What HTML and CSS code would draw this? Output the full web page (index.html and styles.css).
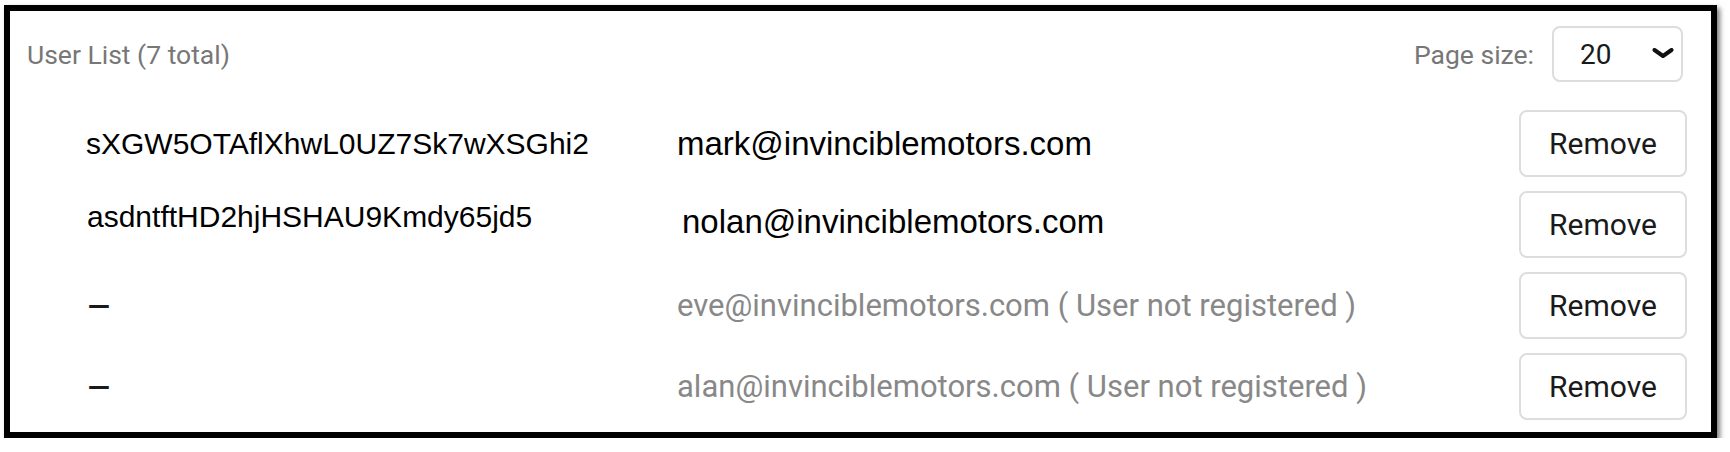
FILE: index.html
```html
<!DOCTYPE html>
<html lang="en">
<head>
    <meta charset="UTF-8">
    <title>User List</title>
    <link rel="stylesheet" href="styles.css">
</head>
<body>
    <div class="user-panel">
        <div class="panel-header">
            <span class="panel-title">User List (7 total)</span>
            <div class="page-size">
                <label for="page-size">Page size:</label>
                <div class="select-wrap">
                    <select id="page-size" name="page-size">
                        <option>10</option>
                        <option selected>20</option>
                        <option>50</option>
                    </select>
                    <svg class="select-chevron" width="22" height="10" viewBox="0 0 22 10">
                        <path d="M2.5 2 L11 8 L19.5 2" fill="none" stroke="#111" stroke-width="4" stroke-linecap="round" stroke-linejoin="round"/>
                    </svg>
                </div>
            </div>
        </div>

        <ul class="user-rows">
            <li class="user-row">
                <span class="user-id">sXGW5OTAflXhwL0UZ7Sk7wXSGhi2</span>
                <span class="user-email">mark@invinciblemotors.com</span>
                <button class="remove-btn">Remove</button>
            </li>
            <li class="user-row">
                <span class="user-id raised">asdntftHD2hjHSHAU9Kmdy65jd5</span>
                <span class="user-email raised-slight">nolan@invinciblemotors.com</span>
                <button class="remove-btn">Remove</button>
            </li>
            <li class="user-row">
                <span class="user-id dash">&ndash;</span>
                <span class="user-email pending">eve@invinciblemotors.com ( User not registered )</span>
                <button class="remove-btn">Remove</button>
            </li>
            <li class="user-row">
                <span class="user-id dash">&ndash;</span>
                <span class="user-email pending">alan@invinciblemotors.com ( User not registered )</span>
                <button class="remove-btn">Remove</button>
            </li>
        </ul>
    </div>
</body>
</html>
```

FILE: styles.css
```css
body {
    margin: 0;
    font-family: Roboto, 'Liberation Sans', sans-serif;
    background-color: #fff;
}

.user-panel {
    box-sizing: border-box;
    width: 1713px;
    height: 433px;
    margin: 5px 0 0 4px;
    border: 6px solid #000;
    background: #fff;
    box-shadow: 3px 3px 5px rgba(0, 0, 0, 0.5);
}

.panel-header {
    display: flex;
    align-items: center;
    justify-content: space-between;
    padding: 15px 28px 0 17px;
    height: 56px;
}

.panel-title {
    font-size: 26.5px;
    color: #777;
}

.page-size {
    display: flex;
    align-items: center;
    gap: 18px;
}

.page-size label {
    font-size: 26.5px;
    color: #777;
}

.select-wrap {
    position: relative;
}

.select-wrap select {
    appearance: none;
    -webkit-appearance: none;
    box-sizing: border-box;
    width: 131px;
    height: 56px;
    padding: 0 0 0 26px;
    border: 2px solid #ddd;
    border-radius: 8px;
    background: #fff;
    font-family: Roboto, sans-serif;
    font-size: 28px;
    color: #1a1a1a;
}

.select-chevron {
    position: absolute;
    right: 9px;
    top: 22px;
    pointer-events: none;
}

.user-rows {
    list-style: none;
    margin: 28px 0 0;
    padding: 0 24px 0 76px;
    display: flex;
    flex-direction: column;
    gap: 14px;
}

.user-row {
    display: grid;
    grid-template-columns: 591px 1fr 168px;
    align-items: center;
    height: 67px;
}

.user-id {
    font-family: 'Liberation Sans', Arial, sans-serif;
    font-size: 30px;
    color: #000;
}

.user-id.raised {
    margin: 0 0 15px 1px;
}

.user-id.dash {
    padding-top: 4px;
    font-family: Roboto, sans-serif;
    font-size: 40px;
    line-height: 1;
    color: #1a1a1a;
}

.user-email {
    font-family: 'Liberation Sans', Arial, sans-serif;
    font-size: 33px;
    color: #000;
}

.user-email.raised-slight {
    margin: 0 0 5px 5px;
}

.user-email.pending {
    font-family: Roboto, sans-serif;
    font-size: 31px;
    color: #888;
}

.remove-btn {
    box-sizing: border-box;
    width: 168px;
    height: 67px;
    border: 2px solid #ddd;
    border-radius: 8px;
    background: #fff;
    font-family: Roboto, sans-serif;
    font-size: 30px;
    color: #1a1a1a;
    cursor: pointer;
}
```
